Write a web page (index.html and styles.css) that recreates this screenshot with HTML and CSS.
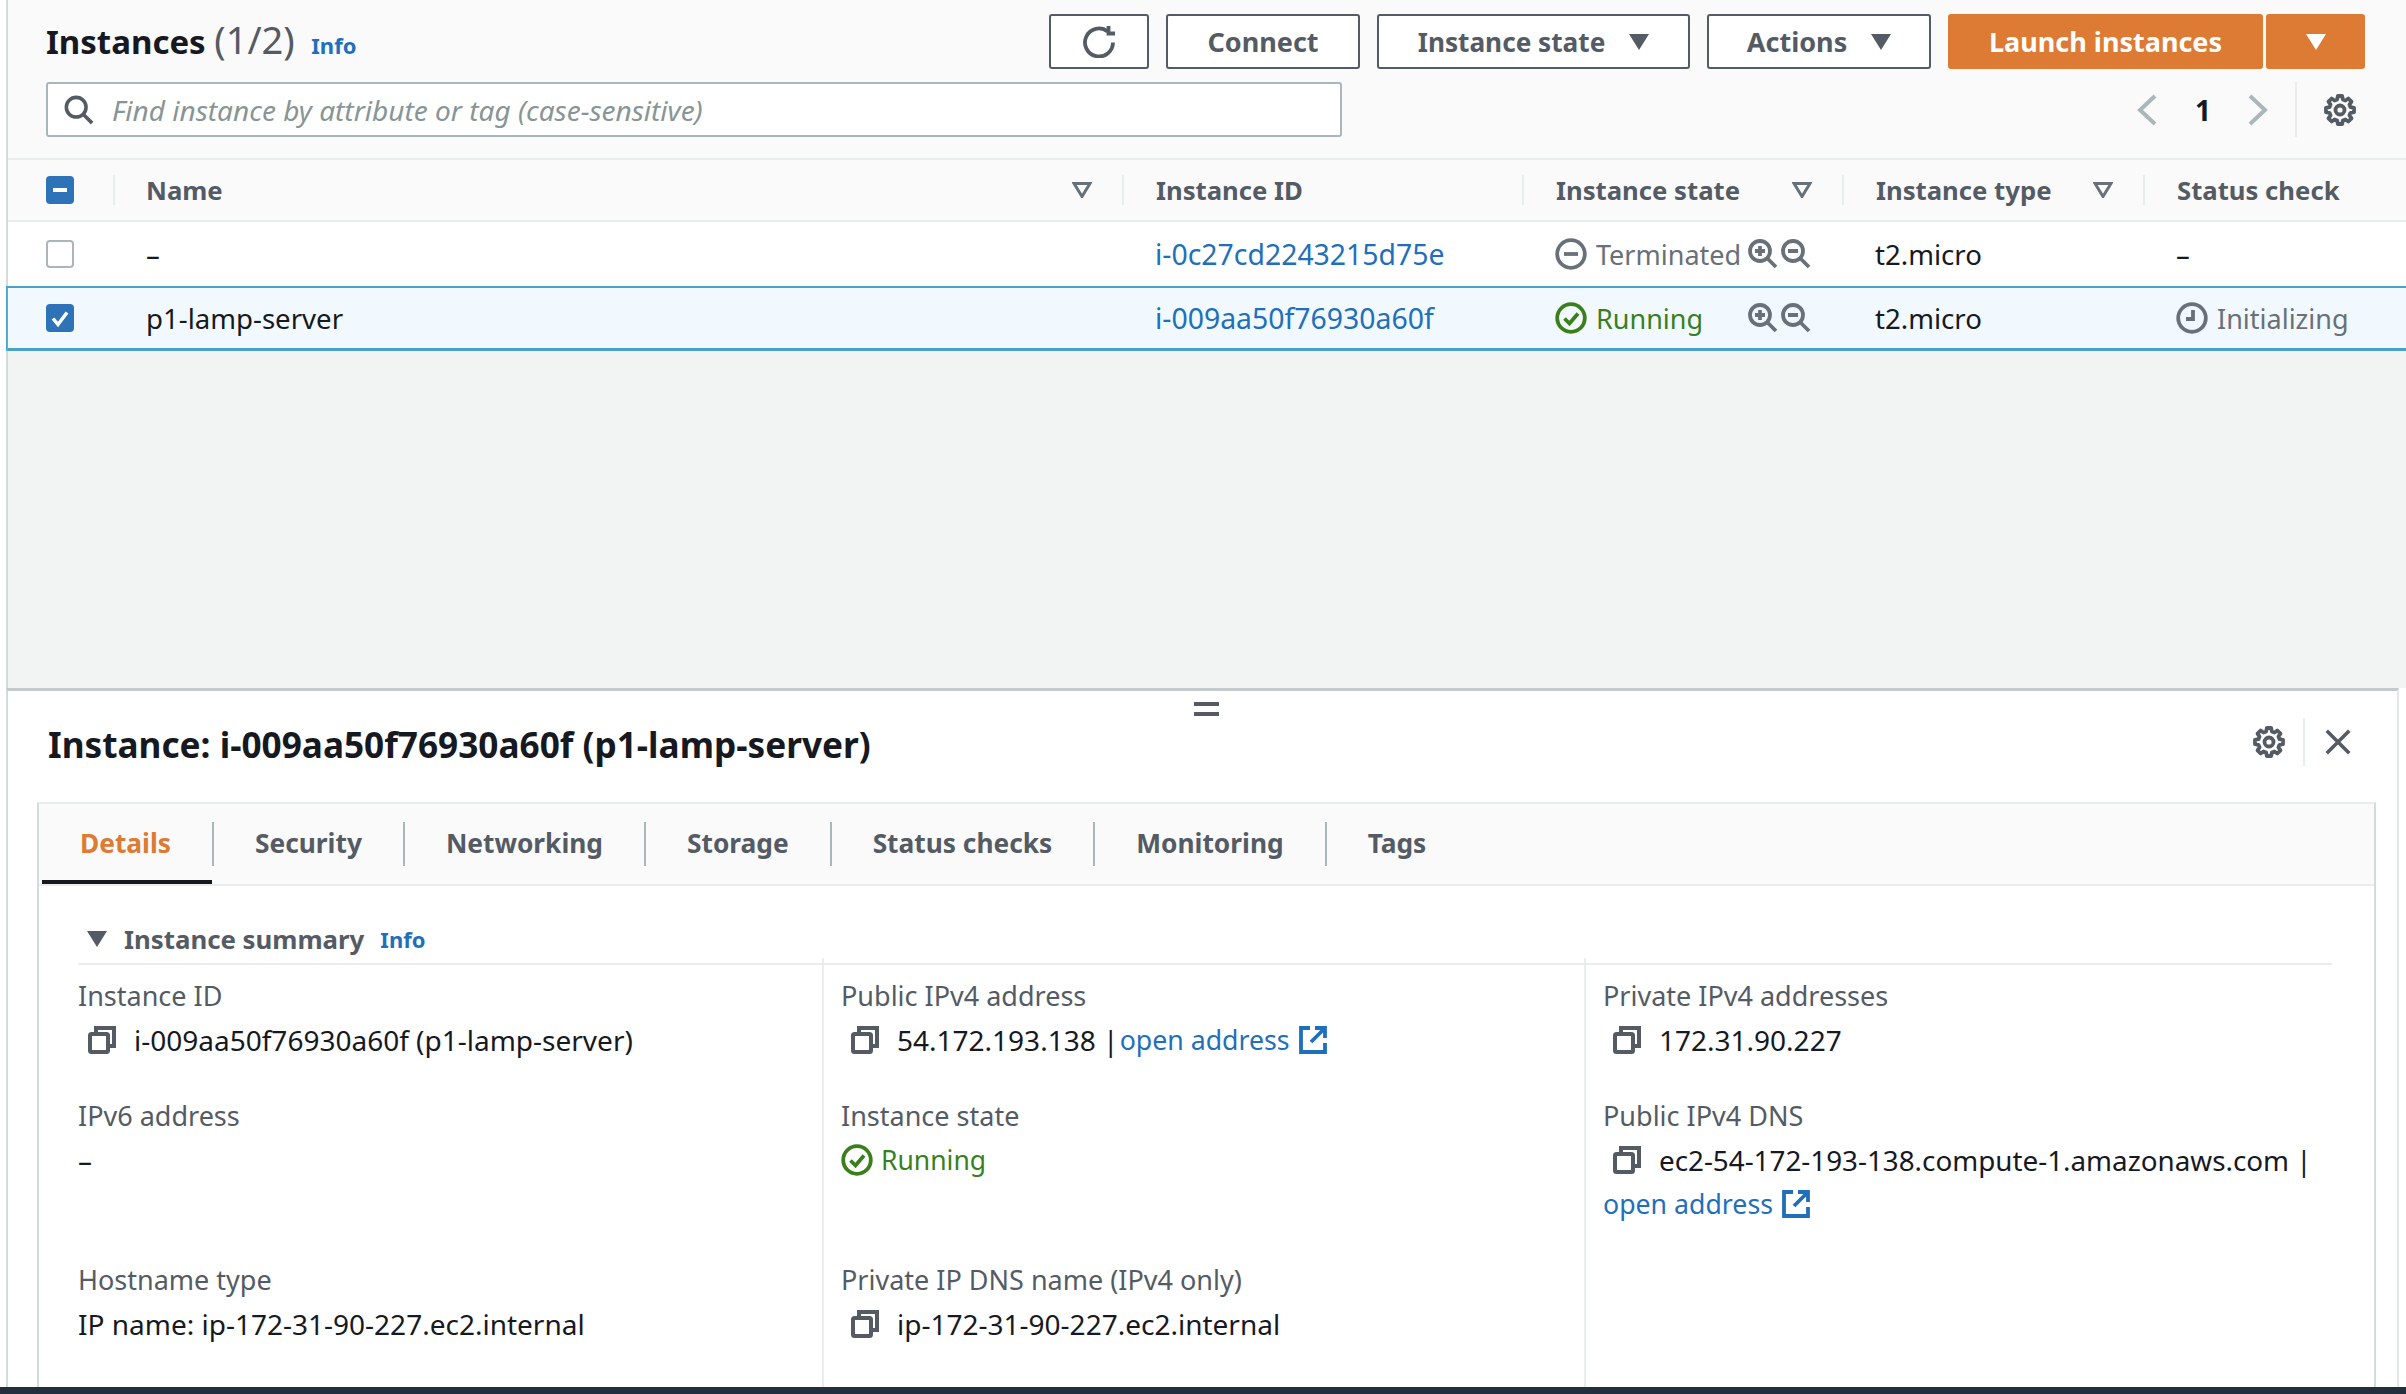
FILE: index.html
```html
<!DOCTYPE html><html lang="en">
<head>
  <meta charset="UTF-8">
  <title>Instances</title>
  <link rel="stylesheet" href="styles.css">
</head>
<body>
  <svg class="sprite" xmlns="http://www.w3.org/2000/svg">
    <symbol id="i-refresh" viewBox="0 0 32 32"><path d="M30 16.5A14 14 0 1 1 24.6 5.4"/><path d="M25.5 0v7.5H32"/></symbol>
    <symbol id="i-search" viewBox="0 0 32 32"><circle cx="13" cy="13" r="10.5"/><path d="M20.5 20.5L30 30"/></symbol>
    <symbol id="i-gear" viewBox="0 0 32 32"><path stroke-linejoin="round" d="M13.8 2H18.2L18.82 5.47 21.45 6.56 24.35 4.5 27.5 7.65 25.44 10.55 26.53 13.18 30 13.8V18.2L26.53 18.82 25.44 21.45 27.5 24.35 24.35 27.5 21.45 25.44 18.82 26.53 18.2 30H13.8L13.18 26.53 10.55 25.44 7.65 27.5 4.5 24.35 6.56 21.45 5.47 18.82 2 18.2V13.8L5.47 13.18 6.56 10.55 4.5 7.65 7.65 4.5 10.55 6.56 13.18 5.47Z"/><circle cx="16" cy="16" r="4.5"/></symbol>
    <symbol id="i-close" viewBox="0 0 32 32"><path d="M4 4l24 24M28 4L4 28"/></symbol>
    <symbol id="i-copy" viewBox="0 0 28 28"><rect x="2" y="8" width="18" height="18" rx="1.5"/><path d="M8 7V2h18v18h-5"/></symbol>
    <symbol id="i-ext" viewBox="0 0 28 28"><path d="M11 2H2v24h24v-9"/><path d="M16 2h10v10M25 3L12 16"/></symbol>
    <symbol id="i-ok" viewBox="0 0 32 32"><circle cx="16" cy="16" r="13.8"/><path d="M9.5 16.5l5 5 8.5-10"/></symbol>
    <symbol id="i-stop" viewBox="0 0 32 32"><circle cx="16" cy="16" r="13.8"/><path d="M9 16h14"/></symbol>
    <symbol id="i-clock" viewBox="0 0 32 32"><circle cx="16" cy="16" r="13.8"/><path d="M17 8v9h-7"/></symbol>
    <symbol id="i-zoomin" viewBox="0 0 30 30"><circle cx="12" cy="12" r="10"/><path d="M19.5 19.5L28 28M12 7v10M7 12h10"/></symbol>
    <symbol id="i-zoomout" viewBox="0 0 30 30"><circle cx="12" cy="12" r="10"/><path d="M19.5 19.5L28 28M7 12h10"/></symbol>
    <symbol id="i-filter" viewBox="0 0 20 16"><path d="M2 1.5h16L10 14.5z"/></symbol>
    <symbol id="i-prev" viewBox="0 0 20 32"><path d="M18 2L3 16l15 14"/></symbol>
    <symbol id="i-next" viewBox="0 0 20 32"><path d="M2 2l15 14L2 30"/></symbol>
  </svg>

  <section class="list">
    <div class="bar">
      <h1 class="title">Instances <span class="count">(1/2)</span> <a class="info">Info</a></h1>
      <div class="actions">
        <button class="btn btn-icon"><svg class="ic ic-32"><use href="#i-refresh"/></svg></button>
        <button class="btn btn-connect">Connect</button>
        <button class="btn btn-state">Instance state <span class="caret"></span></button>
        <button class="btn btn-actions">Actions <span class="caret"></span></button>
        <div class="split">
          <button class="btn btn-primary">Launch instances</button>
          <button class="btn btn-primary btn-drop"><span class="caret"></span></button>
        </div>
      </div>
    </div>

    <div class="bar bar-search">
      <div class="search">
        <svg class="ic ic-search"><use href="#i-search"/></svg>
        <span class="placeholder">Find instance by attribute or tag (case-sensitive)</span>
      </div>
      <div class="pager">
        <svg class="ic chev"><use href="#i-prev"/></svg>
        <span class="page">1</span>
        <svg class="ic chev"><use href="#i-next"/></svg>
        <span class="pager-gear"><svg class="ic ic-32"><use href="#i-gear"/></svg></span>
      </div>
    </div>

    <div class="row row-head">
      <div class="cell cell-check"><span class="check check-some"></span></div>
      <div class="cell"><span class="col-name">Name</span><svg class="filter"><use href="#i-filter"/></svg></div>
      <div class="cell"><span class="col-name">Instance ID</span></div>
      <div class="cell"><span class="col-name">Instance state</span><svg class="filter"><use href="#i-filter"/></svg></div>
      <div class="cell"><span class="col-name">Instance type</span><svg class="filter"><use href="#i-filter"/></svg></div>
      <div class="cell"><span class="col-name">Status check</span></div>
    </div>

    <div class="row">
      <div class="cell cell-check"><span class="check"></span></div>
      <div class="cell">–</div>
      <div class="cell"><a class="link">i-0c27cd2243215d75e</a></div>
      <div class="cell">
        <span class="state state-off"><svg class="ic ic-32"><use href="#i-stop"/></svg>Terminated</span>
        <svg class="ic ic-zoom"><use href="#i-zoomin"/></svg><svg class="ic ic-zoom"><use href="#i-zoomout"/></svg>
      </div>
      <div class="cell">t2.micro</div>
      <div class="cell">–</div>
    </div>

    <div class="row row-selected">
      <div class="cell cell-check"><span class="check check-on"><svg viewBox="0 0 28 28"><path d="M7 14.5l5 6 9-12"/></svg></span></div>
      <div class="cell">p1-lamp-server</div>
      <div class="cell"><a class="link">i-009aa50f76930a60f</a></div>
      <div class="cell">
        <span class="state state-ok"><svg class="ic ic-32"><use href="#i-ok"/></svg>Running</span>
        <svg class="ic ic-zoom"><use href="#i-zoomin"/></svg><svg class="ic ic-zoom"><use href="#i-zoomout"/></svg>
      </div>
      <div class="cell">t2.micro</div>
      <div class="cell"><span class="state state-off"><svg class="ic ic-32"><use href="#i-clock"/></svg>Initializing</span></div>
    </div>
  </section>

  <div class="gap"></div>

  <section class="panel">
    <div class="grip"></div>
    <div class="panel-head">
      <h2 class="panel-title">Instance: i-009aa50f76930a60f (p1-lamp-server)</h2>
      <div class="panel-tools">
        <svg class="ic ic-32"><use href="#i-gear"/></svg>
        <span class="tools-sep"></span>
        <svg class="ic ic-close"><use href="#i-close"/></svg>
      </div>
    </div>

    <div class="tabbox">
      <div class="tabs">
        <span class="tab tab-active">Details</span>
        <span class="tab">Security</span>
        <span class="tab">Networking</span>
        <span class="tab">Storage</span>
        <span class="tab">Status checks</span>
        <span class="tab">Monitoring</span>
        <span class="tab">Tags</span>
      </div>
      <div class="summary">
        <div class="summary-head"><span class="caret caret-small"></span>Instance summary <a class="info">Info</a></div>
        <div class="fields">
          <div class="field">
            <div class="label">Instance ID</div>
            <div class="value"><svg class="ic ic-copy"><use href="#i-copy"/></svg>i-009aa50f76930a60f (p1-lamp-server)</div>
          </div>
          <div class="field">
            <div class="label">Public IPv4 address</div>
            <div class="value"><svg class="ic ic-copy"><use href="#i-copy"/></svg>54.172.193.138 | <a class="link">open address</a><svg class="ic ic-ext"><use href="#i-ext"/></svg></div>
          </div>
          <div class="field">
            <div class="label">Private IPv4 addresses</div>
            <div class="value"><svg class="ic ic-copy"><use href="#i-copy"/></svg>172.31.90.227</div>
          </div>
          <div class="field">
            <div class="label">IPv6 address</div>
            <div class="value plain">–</div>
          </div>
          <div class="field">
            <div class="label">Instance state</div>
            <div class="value plain state-ok"><svg class="ic ic-32"><use href="#i-ok"/></svg>Running</div>
          </div>
          <div class="field">
            <div class="label">Public IPv4 DNS</div>
            <div class="value"><svg class="ic ic-copy"><use href="#i-copy"/></svg><span class="dns">ec2-54-172-193-138.compute-1.amazonaws.com |</span></div>
            <div class="value plain"><a class="link">open address</a><svg class="ic ic-ext"><use href="#i-ext"/></svg></div>
          </div>
          <div class="field">
            <div class="label">Hostname type</div>
            <div class="value plain">IP name: ip-172-31-90-227.ec2.internal</div>
          </div>
          <div class="field">
            <div class="label">Private IP DNS name (IPv4 only)</div>
            <div class="value"><svg class="ic ic-copy"><use href="#i-copy"/></svg>ip-172-31-90-227.ec2.internal</div>
          </div>
          <div class="field"></div>
        </div>
      </div>
    </div>
  </section>

  <div class="footer"></div>
</body>
</html>
```
FILE: styles.css
```css
:root {
  --text: #16191f;
  --muted: #545b64;
  --blue: #1f6fba;
  --green: #3a7f1c;
  --orange: #dd7a33;
  --line: #eaeded;
  --gray: #687078;
}
* { box-sizing: border-box; margin: 0; padding: 0; }
html, body { height: 100%; }
body {
  font-family: "Noto Sans", Arial, sans-serif;
  font-size: 28px;
  color: var(--text);
  background: #fff;
  display: flex;
  flex-direction: column;
  height: 1394px;
  overflow: hidden;
  padding-left: 8px;
}
.sprite { width: 0; height: 0; position: absolute; }
.ic {
  fill: none;
  stroke: var(--muted);
  stroke-width: 3.8;
  flex: none;
}
.ic-32 { width: 32px; height: 32px; }

/* list on top */
.list {
  background: #fafafa;
  border-left: 2px solid #d5dbdb;
  margin-left: -2px;
}
.bar {
  display: flex;
  align-items: center;
  justify-content: space-between;
  padding: 14px 41px 0 38px;
}
.bar-search {
  padding-top: 13px;
  padding-bottom: 21px;
  padding-right: 50px;
}
.title { font-size: 33px; font-weight: 700; line-height: 1; margin-top: -5px; }
.count { font-size: 38px; font-weight: 400; color: var(--muted); }
.info { font-size: 22px; font-weight: 700; color: var(--blue); margin-left: 8px; }
.actions { display: flex; gap: 17px; }
.btn {
  height: 55px;
  font-family: inherit;
  font-size: 27px;
  font-weight: 700;
  color: var(--muted);
  background: #fff;
  border: 2px solid var(--muted);
  border-radius: 3px;
  display: flex;
  align-items: center;
  justify-content: center;
  gap: 24px;
}
.btn-icon { width: 100px; }
.btn-connect { width: 194px; }
.btn-state { width: 313px; font-size: 26.2px; }
.btn-actions { width: 224px; }
.split { display: flex; gap: 3px; }
.btn-primary {
  background: var(--orange);
  border-color: var(--orange);
  color: #fff;
  width: 315px;
}
.btn-drop { width: 99px; }
.caret {
  width: 0;
  height: 0;
  border-left: 10px solid transparent;
  border-right: 10px solid transparent;
  border-top: 16px solid var(--muted);
}
.btn-drop .caret { border-top-color: #fff; }
.caret-small { margin-right: 17px; margin-left: 9px; }

.search {
  width: 1296px;
  height: 55px;
  background: #fff;
  border: 2px solid #aab7b8;
  border-radius: 3px;
  display: flex;
  align-items: center;
  padding-left: 16px;
  gap: 18px;
}
.ic-search { width: 30px; height: 30px; }
.placeholder { font-style: italic; color: #879596; }
.pager { display: flex; align-items: center; height: 55px; }
.chev {
  width: 20px;
  height: 32px;
  stroke: #aab7b8;
  stroke-width: 4;
}
.page { font-weight: 700; margin: 0 37px 0 38px; }
.pager-gear {
  display: flex;
  align-items: center;
  height: 55px;
  margin-left: 27px;
  padding-left: 27px;
  border-left: 2px solid var(--line);
}

/* table rows */
.row {
  display: grid;
  grid-template-columns: 105px 1009px 400px 320px 301px 1fr;
  height: 64px;
  background: #fff;
  align-items: center;
  font-size: 27.6px;
}
.row-head {
  background: #fafafa;
  border-top: 2px solid var(--line);
  border-bottom: 2px solid var(--line);
  font-size: 25.7px;
  font-weight: 700;
  color: var(--muted);
}
.row-selected {
  height: 65px;
  background: #f1f9fe;
  border-top: 2px solid #4aa0c8;
  border-bottom: 3px solid #4aa0c8;
  box-shadow: 0 2px 2px #b8c0c0, -2px 0 0 #4aa0c8;
}
.cell {
  display: flex;
  align-items: center;
  padding: 0 30px 0 33px;
  white-space: nowrap;
  height: 30px;
}
.cell-check { padding-left: 38px; }
.row-head .cell { justify-content: space-between; }
.row-head .cell + .cell {
  border-left: 2px solid var(--line);
  padding-left: 32px;
}
.row-head .cell:nth-child(2) { padding-left: 31px; }
.filter {
  width: 20px;
  height: 16px;
  fill: none;
  stroke: var(--gray);
  stroke-width: 3;
}
.check {
  width: 28px;
  height: 28px;
  border: 2px solid #aab7b8;
  border-radius: 4px;
  background: #fff;
  display: block;
}
.check-some, .check-on {
  background: #2e73b8;
  border: 0;
  position: relative;
}
.check-some::after {
  content: "";
  position: absolute;
  left: 7px;
  top: 12px;
  width: 14px;
  height: 4px;
  background: #fff;
}
.check-on svg {
  display: block;
  fill: none;
  stroke: #fff;
  stroke-width: 3.5;
}
.link { color: var(--blue); }
.row .link { font-size: 28.4px; }
.state {
  display: flex;
  align-items: center;
  gap: 9px;
  width: 193px;
  flex: none;
  font-size: 27px;
}
.state-off { color: var(--gray); }
.state-off .ic { stroke: var(--gray); }
.state-ok { color: var(--green); }
.state-ok .ic { stroke: var(--green); }
.ic-zoom {
  width: 30px;
  height: 30px;
  stroke: var(--gray);
  margin-right: 3px;
}

.gap {
  height: 337px;
  background: #f2f3f3;
  border-left: 2px solid #d5dbdb;
  margin-left: -2px;
}

/* lower panel */
.panel {
  flex: 1;
  position: relative;
  display: flex;
  flex-direction: column;
  border-top: 3px solid #c4caca;
  border-left: 2px solid #d5dbdb;
  border-right: 2px solid #e4e7e7;
  margin: 0 7px 0 -2px;
  padding: 0 21px 0 29px;
}
.grip {
  position: absolute;
  left: 1186px;
  top: 11px;
  width: 25px;
  height: 14px;
  border-top: 4px solid var(--muted);
  border-bottom: 4px solid var(--muted);
}
.panel-head {
  height: 111px;
  display: flex;
  align-items: center;
  justify-content: space-between;
  padding-bottom: 6px;
}
.panel-title {
  font-size: 35.2px;
  font-weight: 700;
  margin-left: 11px;
}
.panel-tools {
  display: flex;
  align-items: center;
  margin-right: 23px;
  padding-bottom: 3px;
}
.tools-sep {
  width: 2px;
  height: 48px;
  background: var(--line);
  margin: 0 18px;
}
.ic-close { width: 30px; height: 30px; }
.tabbox {
  flex: 1;
  display: flex;
  flex-direction: column;
  border: 2px solid #d5dbdb;
  border-top-color: var(--line);
  border-bottom: 0;
}
.tabs {
  height: 82px;
  flex: none;
  background: #fafafa;
  border-bottom: 2px solid var(--line);
  display: flex;
  align-items: center;
  padding-left: 3px;
  font-size: 26.3px;
  font-weight: 700;
  color: var(--muted);
}
.tab {
  height: 44px;
  line-height: 42px;
  padding: 0 41px;
  border-left: 2px solid #aab7b8;
  position: relative;
}
.tab-active {
  border-left: 0;
  width: 170px;
  padding: 0 0 0 38px;
  color: #dd7a33;
}
.tab-active::after {
  content: "";
  position: absolute;
  left: 0;
  right: 0;
  bottom: -18px;
  height: 4px;
  background: var(--text);
}
.summary {
  flex: 1;
  display: flex;
  flex-direction: column;
  padding: 0 42px 0 39px;
}
.summary-head {
  height: 79px;
  flex: none;
  padding-top: 28px;
  line-height: 50px;
  display: flex;
  align-items: center;
  font-size: 25.8px;
  font-weight: 700;
  color: var(--muted);
  border-bottom: 2px solid var(--line);
}
.summary-head .info { margin-left: 16px; }
.fields {
  flex: 1;
  display: grid;
  grid-template-columns: 744px 762px 1fr;
  grid-template-rows: auto auto 1fr;
  margin-top: -7px;
}
.field {
  padding: 0 0 32px;
  line-height: 44px;
  min-width: 0;
}
.field:nth-child(-n+3) { padding-top: 16px; }
.field:nth-child(3n+2), .field:nth-child(3n) {
  border-left: 2px solid var(--line);
  padding-left: 17px;
}
.label { color: var(--muted); font-size: 27px; }
.value {
  display: flex;
  align-items: center;
  white-space: pre;
  padding-left: 10px;
}
.value.plain { padding-left: 0; }
.value .link { font-size: 26.7px; }
.value:not(.plain) .link { margin-left: -6px; }
.dns { font-size: 27.8px; }
.ic-copy { width: 28px; height: 28px; margin-right: 18px; stroke-width: 4; }
.ic-ext {
  width: 28px;
  height: 28px;
  margin-left: 9px;
  stroke: var(--blue);
}
.value.state-ok { font-size: 26.5px; }
.value.state-ok .ic { margin-right: 8px; }

.footer {
  height: 7px;
  flex: none;
  margin-left: -8px;
  background: #232f3e;
}
```
